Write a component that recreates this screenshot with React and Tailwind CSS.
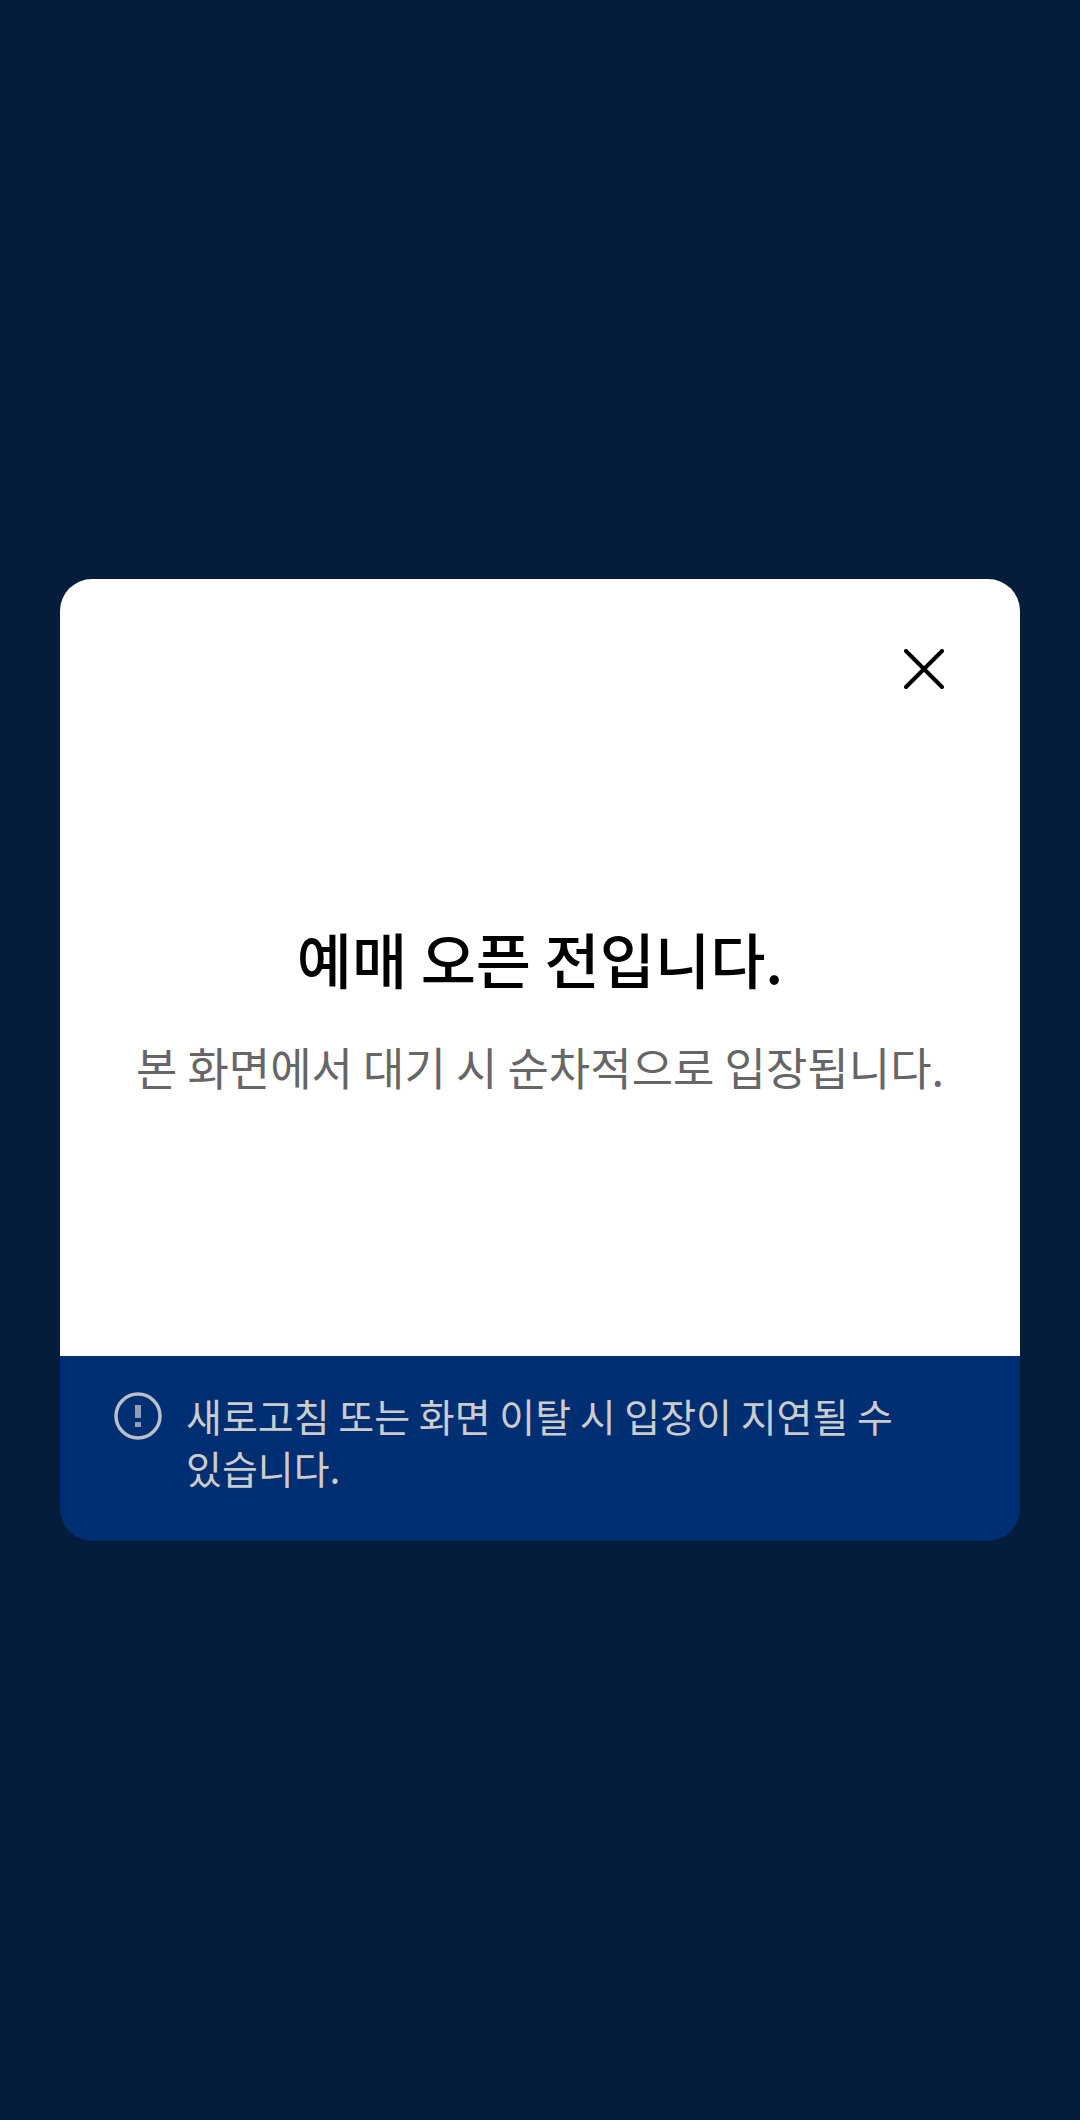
export default function App() {
  return (
    <div className="min-h-screen bg-[#061c3b] flex items-center justify-center px-[60px] font-['Noto_Sans_CJK_KR','Noto_Sans',sans-serif]">
      <div className="w-full h-[962px] rounded-[32px] overflow-hidden flex flex-col">
        {/* Body */}
        <div className="flex-1 bg-white flex flex-col relative">
          <div className="flex justify-end pt-[70px] pr-[76px]">
            <svg width="40" height="40" viewBox="0 0 40 40" fill="none" stroke="#000" strokeWidth="4" strokeLinecap="round">
              <path d="M2 2L38 38M38 2L2 38" />
            </svg>
          </div>
          <div className="mt-[227px] flex flex-col items-center">
            <h1 className="text-[60px] leading-[84px] font-medium text-black">예매 오픈 전입니다.</h1>
            <p className="mt-[36px] text-[45px] leading-[62px] text-[#666666]">본 화면에서 대기 시 순차적으로 입장됩니다.</p>
          </div>
        </div>

        {/* Notice */}
        <div className="h-[185px] shrink-0 bg-[#002e72] flex items-start gap-[24px] pl-[54px] pr-[100px] pt-[33px]">
          <svg className="shrink-0 mt-[3px]" width="48" height="48" viewBox="0 0 48 48" fill="none">
            <circle cx="24" cy="24" r="22" stroke="#b9c0cc" strokeWidth="3.5" />
            <path d="M24 13V26" stroke="#8d9dbb" strokeWidth="6" />
            <path d="M24 30V35" stroke="#8d9dbb" strokeWidth="6" />
          </svg>
          <p className="text-[39px] leading-[52px] text-[#cccccc]">새로고침 또는 화면 이탈 시 입장이 지연될 수 있습니다.</p>
        </div>
      </div>
    </div>
  );
}
